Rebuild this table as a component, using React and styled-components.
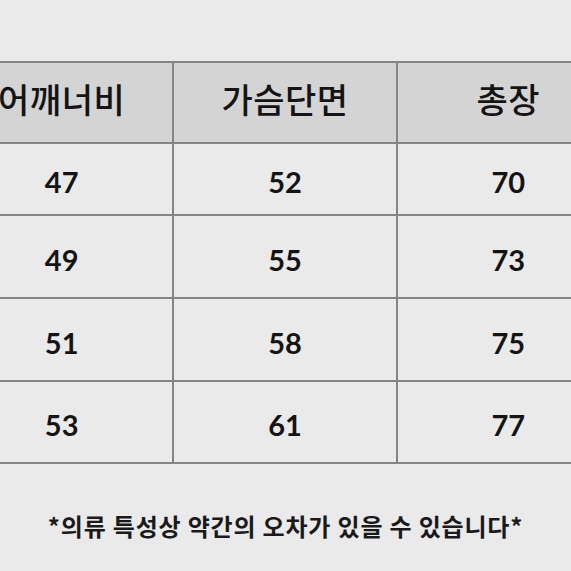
import styled, { createGlobalStyle } from "styled-components";

// size chart: 어깨너비 / 가슴단면 / 총장
const rows = [
    ["47", "52", "70"],
    ["49", "55", "73"],
    ["51", "58", "75"],
    ["53", "61", "77"],
];
const heights = [72, 83, 83, 82];

const GlobalStyle = createGlobalStyle`
    html, body {
        margin: 0;
        padding: 0;
        background: #eaeaea;
        overflow: hidden;
    }
`;

const Page = styled.div`
    width: 571px;
    height: 571px;
    padding-top: 61px;
    box-sizing: border-box;
    overflow: hidden;
    background: #eaeaea;
`;

const Table = styled.table`
    border-collapse: collapse;
    table-layout: fixed;
    width: 672px;
    margin-left: -51px;
`;

const HeadCell = styled.th`
    height: 81px;
    padding: 0 0 8px;
    box-sizing: border-box;
    background: #d4d4d4;
    border: 2px solid #858585;
    font-family: "Noto Sans CJK KR", sans-serif;
    font-weight: 500;
    font-size: 34px;
    letter-spacing: 0.5px;
    color: #141414;
    text-align: center;
    vertical-align: middle;
`;

const Cell = styled.td`
    height: ${(p) => p.$h}px;
    padding: 5px 0 0;
    box-sizing: border-box;
    border: 2px solid #858585;
    font-family: Lato, "Liberation Sans", sans-serif;
    font-weight: 700;
    font-size: 29px;
    color: #141414;
    text-align: center;
    vertical-align: middle;
`;

const Note = styled.p`
    margin: 44px 0 0;
    text-align: center;
    font-family: "Noto Sans CJK KR", sans-serif;
    font-weight: 700;
    font-size: 24px;
    letter-spacing: 0.8px;
    color: #1a1a1a;
`;

const App = () => {
    return (
        <Page>
            <GlobalStyle />
            <Table>
                <thead>
                    <tr>
                        <HeadCell>어깨너비</HeadCell>
                        <HeadCell>가슴단면</HeadCell>
                        <HeadCell>총장</HeadCell>
                    </tr>
                </thead>
                <tbody>
                    {rows.map((r, i) => (
                        <tr key={i}>
                            {r.map((v, j) => (
                                <Cell key={j} $h={heights[i]}>
                                    {v}
                                </Cell>
                            ))}
                        </tr>
                    ))}
                </tbody>
            </Table>
            <Note>*의류 특성상 약간의 오차가 있을 수 있습니다*</Note>
        </Page>
    );
};
export default App;
